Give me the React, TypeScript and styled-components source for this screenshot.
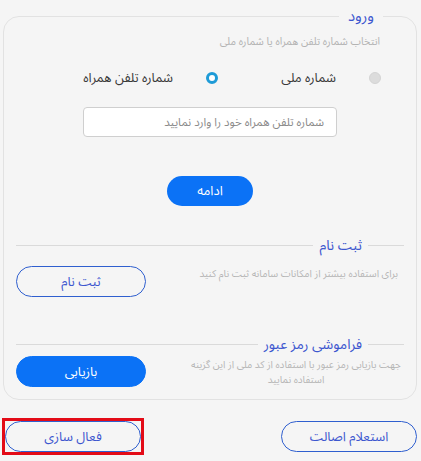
import { FC } from 'react'
import styled, { createGlobalStyle } from 'styled-components'

const GlobalStyle = createGlobalStyle`
  html, body {
    margin: 0;
    padding: 0;
    background: #f5f5f5;
  }
  body {
    font-family: 'Noto Sans Arabic', 'DejaVu Sans', sans-serif;
    direction: rtl;
  }
  * {
    box-sizing: border-box;
  }
`

const App: FC = () => (
  <>
    <GlobalStyle />
    <StylePage>
      <StyleCard>
        <StyleLegend>{'ورود'}</StyleLegend>
        <StyleLogin>
          <StyleHint>{'انتخاب شماره تلفن همراه یا شماره ملی'}</StyleHint>
          <StyleRadioRow>
            <StyleRadioItem>
              <StyleRadioDot $checked={false} />
              <StyleRadioLabel>{'شماره ملی'}</StyleRadioLabel>
            </StyleRadioItem>
            <StyleRadioItem>
              <StyleRadioDot $checked />
              <StyleRadioLabel>{'شماره تلفن همراه'}</StyleRadioLabel>
            </StyleRadioItem>
          </StyleRadioRow>
          <StyleInput placeholder={'شماره تلفن همراه خود را وارد نمایید'} />
          <StyleContinue>{'ادامه'}</StyleContinue>
        </StyleLogin>

        <StyleSectionHeader $top={29}>
          <StyleShortLine />
          <StyleSectionTitle>{'ثبت نام'}</StyleSectionTitle>
          <StyleLongLine />
        </StyleSectionHeader>
        <StyleSectionRow $top={11} $align={'flex-start'}>
          <StyleDesc $center={false}>
            {'برای استفاده بیشتر از امکانات سامانه ثبت نام کنید'}
          </StyleDesc>
          <StylePillButton $variant={'outline'}>{'ثبت نام'}</StylePillButton>
        </StyleSectionRow>

        <StyleSectionHeader $top={37}>
          <StyleShortLine />
          <StyleSectionTitle>{'فراموشی رمز عبور'}</StyleSectionTitle>
          <StyleLongLine />
        </StyleSectionHeader>
        <StyleSectionRow $top={2} $align={'center'}>
          <StyleDesc $center>
            <StyleDescLine>
              {'جهت بازیابی رمز عبور با استفاده از کد ملی از این گزینه'}
            </StyleDescLine>
            <StyleDescLine>{'استفاده نمایید'}</StyleDescLine>
          </StyleDesc>
          <StylePillButton $variant={'solid'}>{'بازیابی'}</StylePillButton>
        </StyleSectionRow>
      </StyleCard>

      <StyleFooter>
        <StyleFooterButton>{'استعلام اصالت'}</StyleFooterButton>
        <StyleHighlight>
          <StyleFooterButton>{'فعال سازی'}</StyleFooterButton>
        </StyleHighlight>
      </StyleFooter>
    </StylePage>
  </>
)

export default App

const StylePage = styled.div`
  width: 421px;
  padding: 5px 4px 0 3px;
`

const StyleCard = styled.fieldset`
  margin: 0;
  padding: 0 12px 12px;
  border: 1px solid #e2e2e2;
  border-radius: 16px;
  min-width: 0;
`

const StyleLegend = styled.legend`
  margin-right: 21px;
  padding: 0 9px;
  font-size: 15px;
  line-height: 22px;
  color: #3d57cf;
`

const StyleLogin = styled.div`
  display: flex;
  flex-direction: column;
  align-items: stretch;
`

const StyleHint = styled.p`
  margin: 7px 0 0;
  padding-right: 24px;
  font-size: 10.5px;
  line-height: 16px;
  color: #b3b3b3;
`

const StyleRadioRow = styled.div`
  display: flex;
  margin-top: 16px;
  padding-right: 23px;
  height: 24px;
  align-items: center;
`

const StyleRadioItem = styled.label`
  display: flex;
  align-items: center;
  gap: 33px;
  width: 163px;
  flex-shrink: 0;
`

const StyleRadioDot = styled.span<{ $checked: boolean }>`
  width: 12px;
  height: 12px;
  border-radius: 50%;
  flex-shrink: 0;
  background: ${(p) => (p.$checked ? '#fff' : '#dcdcdc')};
  border: ${(p) => (p.$checked ? '3.5px solid #1e9bd7' : '1px solid #d4d4d4')};
`

const StyleRadioLabel = styled.span`
  font-size: 13px;
  color: #3a3a3a;
  white-space: nowrap;
`

const StyleInput = styled.input`
  align-self: center;
  margin-top: 17px;
  width: 254px;
  height: 30px;
  padding: 0 12px;
  border: 1px solid #cfcfcf;
  border-radius: 4px;
  background: #fff;
  font-family: inherit;
  font-size: 11.5px;
  direction: rtl;
  outline: none;
  &::placeholder {
    color: #8a8a8a;
  }
`

const StyleContinue = styled.button`
  align-self: center;
  margin-top: 39px;
  width: 86px;
  height: 30px;
  border: none;
  border-radius: 15px;
  background: #0b72f6;
  color: #fff;
  font-family: inherit;
  font-size: 13px;
`

const StyleSectionHeader = styled.div<{ $top: number }>`
  display: flex;
  align-items: center;
  gap: 6px;
  margin-top: ${(p) => p.$top}px;
  height: 20px;
`

const StyleShortLine = styled.span`
  width: 36px;
  height: 1px;
  background: #dadada;
`

const StyleLongLine = styled.span`
  flex: 1;
  height: 1px;
  background: #dadada;
`

const StyleSectionTitle = styled.span`
  font-size: 14px;
  color: #3d57cf;
  white-space: nowrap;
`

const StyleSectionRow = styled.div<{ $top: number; $align: string }>`
  display: flex;
  justify-content: space-between;
  align-items: ${(p) => p.$align};
  margin-top: ${(p) => p.$top}px;
`

const StyleDesc = styled.div<{ $center: boolean }>`
  display: flex;
  flex-direction: column;
  align-items: ${(p) => (p.$center ? 'center' : 'flex-start')};
  width: ${(p) => (p.$center ? '216px' : 'auto')};
  padding: ${(p) => (p.$center ? '0' : '0 6px 0 0')};
  font-size: 10px;
  line-height: 15px;
  color: #b5b5b5;
  white-space: nowrap;
`

const StyleDescLine = styled.span`
  display: block;
  line-height: 15px;
`

const StylePillButton = styled.button<{ $variant: 'solid' | 'outline' }>`
  width: 130px;
  height: 31px;
  flex-shrink: 0;
  border-radius: 16px;
  font-family: inherit;
  font-size: 13px;
  border: 1px solid ${(p) => (p.$variant === 'solid' ? '#0b72f6' : '#2f5fcf')};
  background: ${(p) => (p.$variant === 'solid' ? '#0b72f6' : 'transparent')};
  color: ${(p) => (p.$variant === 'solid' ? '#fff' : '#3d57cf')};
`

const StyleFooter = styled.div`
  display: flex;
  justify-content: space-between;
  align-items: center;
  margin: 18px 0 0 -1px;
`

const StyleHighlight = styled.div`
  display: flex;
  border: 3px solid #e30b17;
`

const StyleFooterButton = styled.button`
  width: 136px;
  height: 31px;
  border: 1px solid #2f5fcf;
  border-radius: 16px;
  background: transparent;
  color: #3d57cf;
  font-family: inherit;
  font-size: 13px;
`
